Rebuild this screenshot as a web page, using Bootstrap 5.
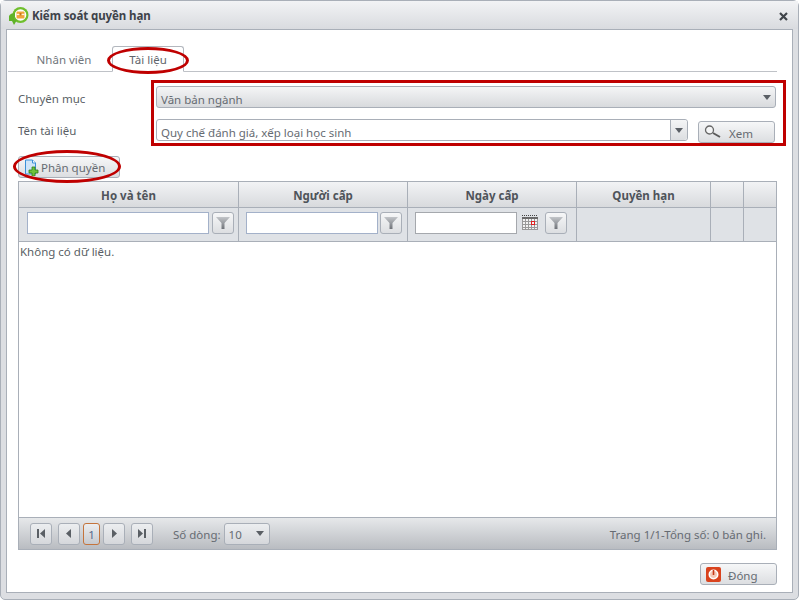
<!DOCTYPE html>
<html lang="vi">
<head>
<meta charset="utf-8">
<title>Kiểm soát quyền hạn</title>
<link href="https://cdn.jsdelivr.net/npm/bootstrap@5.3.0/dist/css/bootstrap.min.css" rel="stylesheet">
<style>
html,body{height:600px;margin:0;overflow:hidden;background:#fff}
body{font-family:"Noto Sans","Open Sans",sans-serif;font-size:11.5px;line-height:16px;color:#5f646b;position:relative}
.win{height:600px;width:799px;background:#dcdee2;border:1px solid #a9afb8;border-radius:6px 6px 5px 5px;padding:0 5px 6px;display:flex;flex-direction:column}
.win-title{height:28px;margin:0 -5px;padding:2px 10px 0 7px;background:linear-gradient(#f2f3f5,#d9dbdf);display:flex;align-items:center;gap:3px;font-weight:700;color:#3d4249;flex:none;letter-spacing:-.1px}
.win-body{flex:1;background:#fff;border:1px solid #a9afb8;padding:16px 15px 7px 11px;display:flex;flex-direction:column;min-height:0}
.tabbar.nav-tabs{border-bottom:1px solid #bfc2c7;padding:0;width:769px;margin-left:-10px;height:26px;--bs-nav-tabs-border-width:0}
.tabbar .nav-link{padding:5px 0 0;height:26px;color:#71767c;text-align:center;border:1px solid transparent;border-radius:3px 3px 0 0;margin:0;background:none}
.tabbar .nav-link.tab-a{width:104px;padding-left:8px}
.tabbar .nav-link.tab-b{width:72px;border-color:#b3b7be #b3b7be #fff;color:#5f646b;background:#fff}
.frm-row{display:flex;align-items:center}
.frm-lbl{width:138px;color:#5a5f66;flex:none}
.r1{margin-top:14px;height:22px}
.r2{margin-top:11px;height:24px;align-items:flex-start}
.r1 .frm-lbl{padding-top:4px}
.r2 .frm-lbl{line-height:22px;padding-top:1px}
.sel{height:22px;border:1px solid #a9afb8;border-radius:3px;display:flex;align-items:center;padding-left:4px;color:#666b72}
.sel>span:first-child{padding-top:6px}
.sel-main{width:620px;background:linear-gradient(#f4f5f6,#d8dadd);position:relative}
.caret-d{width:0;height:0;border:4px solid transparent;border-top:5px solid #5a5f65;border-bottom:0;flex:none}
.sel-main .caret-d{margin:0 4px 0 auto}
.combo{width:532px;background:#fff;padding-right:0}
.combo-btn{margin-left:auto;width:17px;height:20px;border-left:1px solid #a9afb8;background:linear-gradient(#f4f5f6,#dcdee1);display:flex;align-items:center;justify-content:center;border-radius:0 3px 3px 0}
.tbtn.btn{--bs-btn-padding-x:0;--bs-btn-padding-y:0;--bs-btn-font-size:11.5px;--bs-btn-line-height:16px;--bs-btn-border-radius:3px;--bs-btn-color:#666b72;--bs-btn-border-color:#a9afb8;--bs-btn-hover-color:#666b72;background:linear-gradient(#f6f7f8,#dcdee1);display:flex;align-items:center;font-family:inherit}
.btn-xem{width:77px;height:22px;margin:2px 0 0 10px;padding-left:5px;gap:7px}
.xem-t,.dong-t{padding-top:3px}
.pq-t{padding-top:1px}
.btn-pq{width:102px;height:22px;margin-top:13px;padding-left:5px;gap:1px;flex:none}
.grid-box{margin-top:3px;width:759px;height:369px;border:1px solid #a9afb8;display:flex;flex-direction:column;flex:none}
.gtbl.table{table-layout:fixed;margin:0;width:757px;border-collapse:separate;border-spacing:0;--bs-table-bg:transparent;--bs-table-color:#4a4f55}
.gtbl th,.gtbl td{padding:0;border:0;border-right:1px solid #a9afb8;vertical-align:middle}
.gtbl tr>*:last-child{border-right:0}
.c1{width:220px}.c2,.c3{width:169px}.c4{width:134px}.c5{width:33px}
.ghead th{height:26px;background:linear-gradient(#f2f3f5,#d8dadd);text-align:center;font-weight:700;color:#4f545a;border-bottom:1px solid #a9afb8;padding-top:3px}
.gflt td{height:34px;background:#dfe2e6;border-bottom:1px solid #a9afb8}
.flt{display:flex;align-items:center;padding-bottom:4px}
.f1{padding-left:8px}.f2{padding-left:7px}.f3{padding-left:7px}
.tinput{height:22px;border:1px solid #a3b1c9;background:#fff;flex:none;border-radius:0;padding:0}
.w1{width:182px}.w2{width:132px}.w3{width:102px;border-color:#a5a8ad}
.fbtn{width:22px;height:22px;margin-left:3px;justify-content:center;flex:none}
.f2 .fbtn{margin-left:2px}
.cal{margin:0 7px 0 5px;flex:none}
.f3 .fbtn{margin-left:0}
.gbody{flex:1;padding:2px 1px;color:#5a5f65;min-height:0}
.gfoot{height:32px;flex:none;background:linear-gradient(#e6e8ea,#b9bcc1);border-top:1px solid #a9afb8;display:flex;align-items:center;padding:0 10px 0 11px;color:#666b72}
.gfoot>span{padding-top:2px}
.pbtn{width:22px;height:22px;justify-content:center;flex:none;background:linear-gradient(#eceef0,#d5d7db)!important}
.pcur{width:17px;height:22px;border:1px solid #c4743c;border-radius:3px;text-align:center;line-height:22px;color:#54688c;flex:none;margin:0 3px;background:linear-gradient(#eceef0,#c6c9ce)}
.ml6{margin-left:6px}
.lbl-so{margin:0 3px 0 20px}
.psel{width:46px;height:22px;border:1px solid #a9afb8;border-radius:3px;display:flex;align-items:center;padding-left:4px;background:linear-gradient(#eceef0,#d5d7db)}
.psel>span{padding-top:3px}
.psel .caret-d{margin:0 5px 0 auto}
.bot-row{display:flex;justify-content:flex-end;margin-top:13px;width:759px}
.btn-dong{width:77px;height:22px;padding-left:5px;gap:7px}
.anno{position:absolute;border:3px solid #bf0000;pointer-events:none}
.a-rect{left:151px;top:80px;width:635px;height:66px}
.a-e1{left:107px;top:47px;width:82px;height:27px;border-radius:50%}
.a-e2{left:13px;top:150px;width:108px;height:33px;border-radius:50%}
</style>
</head>
<body>
<svg width="0" height="0" class="position-absolute"><defs><linearGradient id="fg" x1="0" y1="0" x2="0" y2="1"><stop offset="0" stop-color="#c2c5c9"/><stop offset="1" stop-color="#6f7379"/></linearGradient></defs></svg>
<div class="win">
  <div class="win-title">
    <svg width="21" height="20" viewBox="0 0 21 20"><circle cx="12.500" cy="9" r="8" fill="#6fbf2c"/><circle cx="12.500" cy="9" r="5.800" fill="#fff"/><path d="M1 10c1-2 3-3 6-3v3l-1 3 3 1-3 5-2-4H1z" fill="#5fb228"/><rect x="8.500" y="5.500" width="8" height="7" rx="1" fill="#f0a53a"/><rect x="8.500" y="7.800" width="8" height="1.300" fill="#fff3d8"/><rect x="11.500" y="7" width="2" height="2.500" fill="#c8741a"/></svg>
    <span>Kiểm soát quyền hạn</span>
    <svg class="ms-auto" width="9" height="9" viewBox="0 0 9 9"><path d="M1 1l7 7M8 1L1 8" stroke="#3f444a" stroke-width="2.200"/></svg>
  </div>
  <div class="win-body">
    <ul class="nav nav-tabs tabbar flex-nowrap">
      <li class="nav-item"><a class="nav-link tab-a" href="#">Nhân viên</a></li>
      <li class="nav-item"><a class="nav-link tab-b" href="#">Tài liệu</a></li>
    </ul>
    <div class="frm-row r1">
      <div class="frm-lbl">Chuyên mục</div>
      <div class="sel sel-main"><span>Văn bản ngành</span><i class="caret-d"></i></div>
    </div>
    <div class="frm-row r2">
      <div class="frm-lbl">Tên tài liệu</div>
      <div class="sel combo"><span>Quy chế đánh giá, xếp loại học sinh</span><span class="combo-btn"><i class="caret-d"></i></span></div>
      <button class="btn tbtn btn-xem" type="button">
        <svg width="18" height="14" viewBox="0 0 18 14"><circle cx="5.500" cy="5" r="4" fill="#f4f5f6" stroke="#666" stroke-width="1.300"/><path d="M9 8l7 4" stroke="#5a5a5a" stroke-width="2"/></svg>
        <span class="xem-t">Xem</span>
      </button>
    </div>
    <button class="btn tbtn btn-pq" type="button">
      <svg width="16" height="17" viewBox="0 0 16 17"><path d="M1.500 1h7l3 3v11h-10z" fill="#cfe4f8" stroke="#3a8fd8"/><path d="M8.500 1v3h3" fill="#fff" stroke="#3a8fd8"/><path d="M8 8h3v3h3v3h-3v3H8v-3H5v-3h3z" fill="#6dc23a" stroke="#2f7f1b" stroke-width=".8"/></svg>
      <span class="pq-t">Phân quyền</span>
    </button>
    <div class="grid-box">
      <table class="table gtbl">
        <colgroup><col class="c1"><col class="c2"><col class="c3"><col class="c4"><col class="c5"><col></colgroup>
        <thead>
          <tr class="ghead"><th>Họ và tên</th><th>Người cấp</th><th>Ngày cấp</th><th>Quyền hạn</th><th></th><th></th></tr>
        </thead>
        <tbody>
          <tr class="gflt">
            <td><div class="flt f1"><input class="tinput w1" type="text"><button class="btn tbtn fbtn" type="button"><svg width="14" height="12" viewBox="0 0 14 12"><path d="M0 0h14L8.500 6v6h-3V6z" fill="url(#fg)"/></svg></button></div></td>
            <td><div class="flt f2"><input class="tinput w2" type="text"><button class="btn tbtn fbtn" type="button"><svg width="14" height="12" viewBox="0 0 14 12"><path d="M0 0h14L8.500 6v6h-3V6z" fill="url(#fg)"/></svg></button></div></td>
            <td><div class="flt f3"><input class="tinput w3" type="text">
              <svg class="cal" width="16" height="17" viewBox="0 0 16 17"><path d="M0 1.500h16" stroke="#444" stroke-dasharray="1 1"/><rect x="0" y="3" width="16" height="13" fill="#f2f2f2"/><rect x="0" y="3" width="16" height="2" fill="#6a6a6a"/><path d="M.5 5v11M3.500 5v11M6.500 5v11M9.500 5v11M12.500 5v11M15.500 5v11M0 7.500h16M0 10.500h16M0 13.500h16M0 15.500h16" stroke="#999" fill="none"/><rect x="9.500" y="7.500" width="3" height="3" fill="none" stroke="#e02020"/></svg>
              <button class="btn tbtn fbtn" type="button"><svg width="14" height="12" viewBox="0 0 14 12"><path d="M0 0h14L8.500 6v6h-3V6z" fill="url(#fg)"/></svg></button></div></td>
            <td></td><td></td><td></td>
          </tr>
        </tbody>
      </table>
      <div class="gbody">Không có dữ liệu.</div>
      <div class="gfoot">
        <button class="btn tbtn pbtn" type="button"><svg width="8" height="9" viewBox="0 0 8 9"><path d="M0 0h2v9H0zM8 0v9L3 4.500z" fill="#5a5f65"/></svg></button>
        <button class="btn tbtn pbtn ml6" type="button"><svg width="6" height="9" viewBox="0 0 6 9"><path d="M5 0v9L0 4.500z" fill="#5a5f65"/></svg></button>
        <div class="pcur">1</div>
        <button class="btn tbtn pbtn" type="button"><svg width="6" height="9" viewBox="0 0 6 9"><path d="M1 0v9l5-4.500z" fill="#5a5f65"/></svg></button>
        <button class="btn tbtn pbtn ml6" type="button"><svg width="8" height="9" viewBox="0 0 8 9"><path d="M0 0v9l5-4.500zM6 0h2v9H6z" fill="#5a5f65"/></svg></button>
        <span class="lbl-so">Số dòng:</span>
        <div class="psel"><span>10</span><i class="caret-d"></i></div>
        <span class="ms-auto">Trang 1/1-Tổng số: 0 bản ghi.</span>
      </div>
    </div>
    <div class="bot-row">
      <button class="btn tbtn btn-dong" type="button">
        <svg width="15" height="15" viewBox="0 0 15 15"><rect width="15" height="15" rx="2" fill="#d9431e"/><circle cx="7.500" cy="7.500" r="4.200" fill="#f4c9b8" stroke="#fff" stroke-width="1.600"/><path d="M7.500 3v5" stroke="#c73a18" stroke-width="1.600"/></svg>
        <span class="dong-t">Đóng</span>
      </button>
    </div>
  </div>
</div>
<div class="anno a-rect"></div>
<div class="anno a-e1"></div>
<div class="anno a-e2"></div>
</body>
</html>
